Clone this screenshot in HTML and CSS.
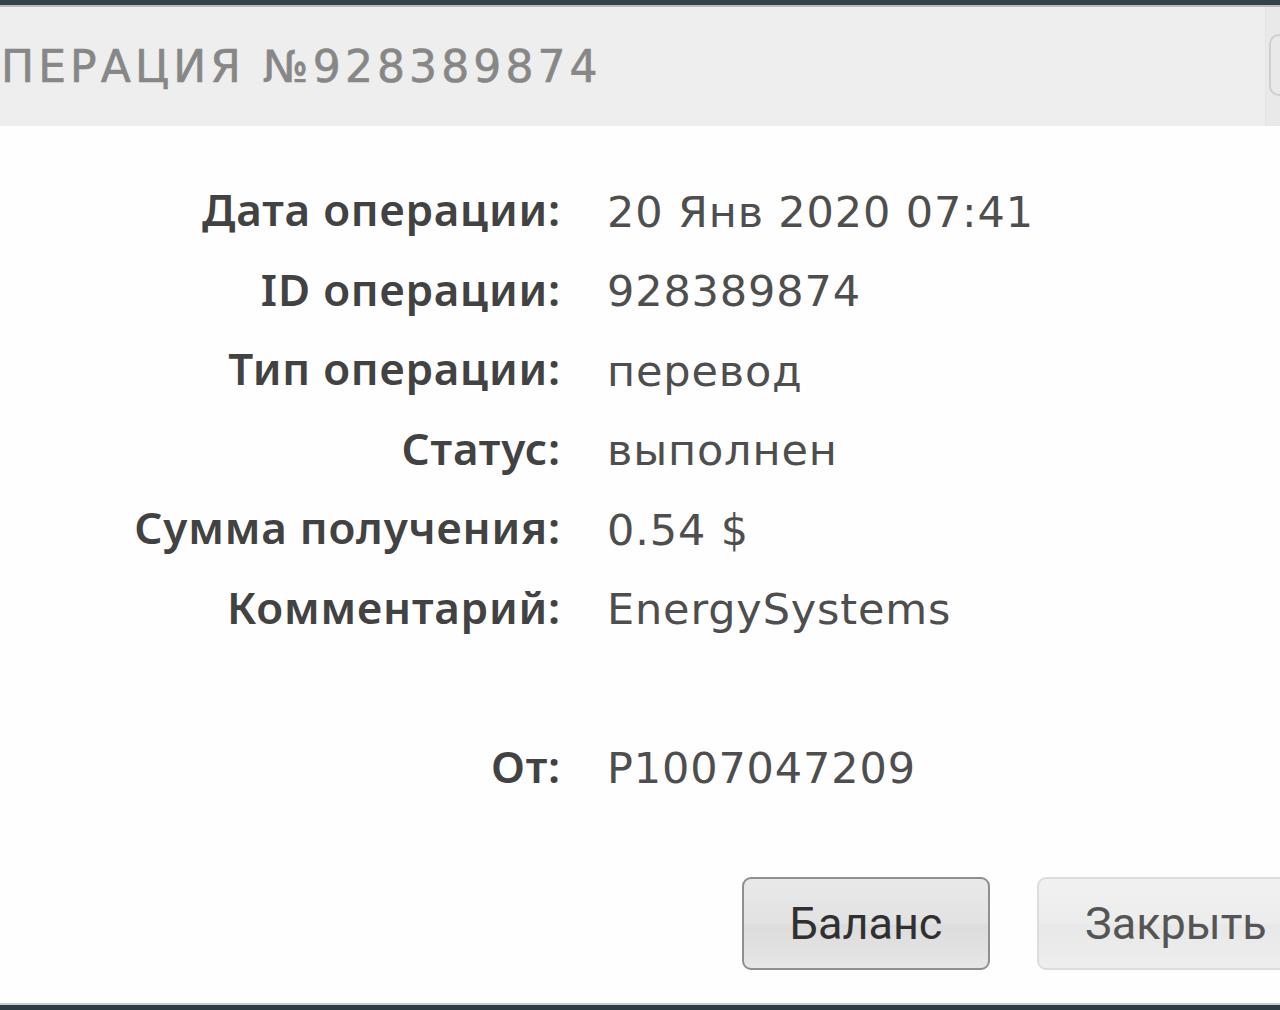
FILE: index.html
```html
<!DOCTYPE html>
<html lang="ru">
<head>
<meta charset="utf-8">
<title>Операция</title>
<link rel="stylesheet" href="styles.css">
</head>
<body>
<div class="screen">
  <div class="topbar"></div>
  <div class="dialog">
    <div class="header">
      <div class="title">ПЕРАЦИЯ №928389874</div>
      <div class="header-side"><div class="close-btn"></div></div>
    </div>
    <div class="content">
      <div class="main">
        <div class="details">
          <div class="label">Дата операции:</div><div class="value">20 Янв 2020 07:41</div>
          <div class="label">ID операции:</div><div class="value">928389874</div>
          <div class="label">Тип операции:</div><div class="value">перевод</div>
          <div class="label">Статус:</div><div class="value">выполнен</div>
          <div class="label">Сумма получения:</div><div class="value">0.54 $</div>
          <div class="label">Комментарий:</div><div class="value">EnergySystems</div>
          <div class="label"></div><div class="value"></div>
          <div class="label">От:</div><div class="value">P1007047209</div>
        </div>
        <div class="actions">
          <button class="btn btn-primary">Баланс</button>
          <button class="btn btn-secondary">Закрыть</button>
        </div>
      </div>
      <div class="scroll-side"></div>
    </div>
  </div>
  <div class="bottombar"></div>
</div>
</body>
</html>
```
FILE: styles.css
```css
html, body {
  margin: 0;
  padding: 0;
  background: #fdfefc;
  overflow: hidden;
}
.screen {
  width: 1280px;
  height: 1010px;
  display: flex;
  flex-direction: column;
  overflow: hidden;
}
.topbar {
  height: 5px;
  background: #34424b;
  border-bottom: 2px solid #b9bdbd;
  flex: none;
}
.dialog {
  flex: 1;
  display: flex;
  flex-direction: column;
  min-height: 0;
}
.header {
  height: 119px;
  background: #eeeeee;
  display: flex;
  align-items: center;
  flex: none;
}
.title {
  flex: 1;
  font-family: "DejaVu Sans", sans-serif;
  font-weight: 400;
  font-size: 44px;
  letter-spacing: 4.1px;
  color: #878787;
  padding-left: 1px;
  white-space: nowrap;
  -webkit-text-stroke: 0.6px #878787;
}
.header-side {
  width: 14px;
  align-self: stretch;
  background: #e9e9e9;
  border-left: 1px solid #e4e4e4;
  display: flex;
  align-items: center;
  overflow: hidden;
}
.close-btn {
  width: 40px;
  height: 58px;
  margin-left: 3px;
  margin-top: -4px;
  border: 2px solid #cfcfcf;
  border-radius: 10px;
  flex: none;
}
.content {
  flex: 1;
  display: flex;
  min-height: 0;
  background: #fefefe;
}
.main {
  flex: 1;
  display: flex;
  flex-direction: column;
  padding-top: 46px;
}
.scroll-side {
  width: 12px;
  height: 542px;
  background: #f0f0f0;
  border-left: 1px solid #e6e6e6;
  flex: none;
}
.details {
  display: grid;
  grid-template-columns: 561px auto;
  column-gap: 46px;
  grid-auto-rows: 79.5px;
  align-items: center;
}
.label {
  text-align: right;
  font-family: "Noto Sans", "Open Sans", sans-serif;
  font-weight: 600;
  font-size: 44px;
  letter-spacing: 0.8px;
  color: #424242;
  white-space: nowrap;
  padding-bottom: 5px;
}
.value {
  font-family: "DejaVu Sans", sans-serif;
  font-weight: 400;
  font-size: 43px;
  color: #4e4e4e;
  white-space: nowrap;
  letter-spacing: 0.85px;
}
.actions {
  display: flex;
  gap: 47px;
  padding-left: 742px;
  margin-top: 69px;
}
.btn {
  flex: none;
  height: 93px;
  border-radius: 9px;
  font-family: Roboto, sans-serif;
  font-size: 45px;
  padding: 0;
  margin: 0;
}
.btn-primary {
  width: 248px;
  border: 2px solid #8f8f8f;
  background: linear-gradient(#e9e9e9, #e2e2e2 50%, #dcdcdc 52%, #e6e6e6);
  color: #303030;
}
.btn-secondary {
  width: 262px;
  border: 2px solid #dcdcdc;
  background: linear-gradient(#f1f1f1, #ececec 50%, #e8e8e8 52%, #eeeeee);
  color: #555555;
  text-align: left;
  padding-left: 46px;
}
.bottombar {
  height: 5px;
  flex: none;
  background: #2f3b42;
  border-top: 2px solid #c9cdcc;
}
```
